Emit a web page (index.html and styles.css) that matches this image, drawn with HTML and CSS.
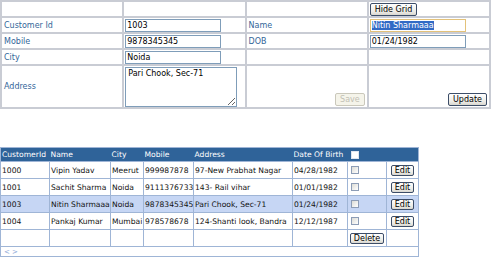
FILE: index.html
```html
<!DOCTYPE html>
<html lang="en">
<head>
    <meta charset="UTF-8">
    <title>Customers</title>
    <link rel="stylesheet" href="styles.css">
</head>
<body>

<table class="form-table">
    <tr>
        <td></td>
        <td></td>
        <td></td>
        <td><button type="button" class="btn">Hide Grid</button></td>
    </tr>
    <tr>
        <td class="label">Customer Id</td>
        <td><input type="text" class="textbox" value="1003"></td>
        <td class="label">Name</td>
        <td><div class="textbox focused"><span class="selected-text">Nitin Sharmaaa</span></div></td>
    </tr>
    <tr>
        <td class="label">Mobile</td>
        <td><input type="text" class="textbox" value="9878345345"></td>
        <td class="label">DOB</td>
        <td><input type="text" class="textbox" value="01/24/1982"></td>
    </tr>
    <tr>
        <td class="label">City</td>
        <td><input type="text" class="textbox" value="Noida"></td>
        <td></td>
        <td></td>
    </tr>
    <tr class="tall-row">
        <td class="label">Address</td>
        <td><textarea class="address">Pari Chook, Sec-71</textarea></td>
        <td class="action-cell"><button type="button" class="btn" disabled>Save</button></td>
        <td class="action-cell"><button type="button" class="btn">Update</button></td>
    </tr>
</table>

<table class="grid">
    <colgroup>
        <col class="col-id">
        <col class="col-name">
        <col class="col-city">
        <col class="col-mobile">
        <col class="col-address">
        <col class="col-dob">
        <col class="col-check">
        <col class="col-edit">
    </colgroup>
    <tr>
        <th>CustomerId</th>
        <th>Name</th>
        <th>City</th>
        <th>Mobile</th>
        <th>Address</th>
        <th>Date Of Birth</th>
        <th><input type="checkbox" class="check check-head"></th>
        <th></th>
    </tr>
    <tr>
        <td>1000</td>
        <td>Vipin Yadav</td>
        <td>Meerut</td>
        <td>999987878</td>
        <td>97-New Prabhat Nagar</td>
        <td>04/28/1982</td>
        <td><input type="checkbox" class="check"></td>
        <td class="center"><button type="button" class="btn btn-small">Edit</button></td>
    </tr>
    <tr>
        <td>1001</td>
        <td>Sachit Sharma</td>
        <td>Noida</td>
        <td>9111376733</td>
        <td>143- Rail vihar</td>
        <td>01/01/1982</td>
        <td><input type="checkbox" class="check"></td>
        <td class="center"><button type="button" class="btn btn-small">Edit</button></td>
    </tr>
    <tr class="selected">
        <td>1003</td>
        <td>Nitin Sharmaaa</td>
        <td>Noida</td>
        <td>9878345345</td>
        <td>Pari Chook, Sec-71</td>
        <td>01/24/1982</td>
        <td><input type="checkbox" class="check"></td>
        <td class="center"><button type="button" class="btn btn-small">Edit</button></td>
    </tr>
    <tr>
        <td>1004</td>
        <td>Pankaj Kumar</td>
        <td>Mumbai</td>
        <td>978578678</td>
        <td>124-Shanti look, Bandra</td>
        <td>12/12/1987</td>
        <td><input type="checkbox" class="check"></td>
        <td class="center"><button type="button" class="btn btn-small">Edit</button></td>
    </tr>
    <tr>
        <td></td>
        <td></td>
        <td></td>
        <td></td>
        <td></td>
        <td></td>
        <td class="center"><button type="button" class="btn btn-small">Delete</button></td>
        <td></td>
    </tr>
    <tr class="pager">
        <td colspan="8">&lt; &gt;</td>
    </tr>
</table>

</body>
</html>
```

FILE: styles.css
```css
body {
    margin: 0;
    background: #fff;
    font-family: "DejaVu Sans", Verdana, sans-serif;
    font-size: 8px;
    color: #111;
}

/* edit form */

.form-table {
    border-collapse: collapse;
    table-layout: fixed;
    width: 491px;
}

.form-table td {
    border: 2px solid #c9ccd4;
    height: 14px;
    padding: 0 1px;
    vertical-align: middle;
}

.form-table .label {
    color: #336699;
    padding-left: 2px;
}

.form-table .tall-row td {
    height: 40px;
}

.form-table .action-cell {
    text-align: right;
    vertical-align: bottom;
    padding: 0 2px 1px 0;
}

.textbox {
    display: block;
    box-sizing: border-box;
    width: 96px;
    height: 13px;
    margin: 0;
    padding: 0 1px;
    border: 1px solid #7f9db9;
    background: #fff;
    font-family: "DejaVu Sans", Verdana, sans-serif;
    font-size: 8px;
    line-height: 11px;
    color: #000;
    outline: none;
}

.textbox.focused {
    border-color: #e3c27a;
}

.selected-text {
    background: #316ac5;
    color: #fff;
}

.address {
    display: block;
    box-sizing: border-box;
    width: 112px;
    height: 40px;
    margin: 0;
    padding: 1px 2px;
    border: 1px solid #7f9db9;
    font-family: "DejaVu Sans", Verdana, sans-serif;
    font-size: 8px;
    color: #000;
}

.btn {
    height: 13px;
    margin: 0;
    padding: 0 4px;
    border: 1px solid #3c4d68;
    border-radius: 2px;
    background: linear-gradient(#ffffff, #ecebe6 70%, #d8d6cf);
    font-family: "DejaVu Sans", Verdana, sans-serif;
    font-size: 8px;
    line-height: 11px;
    color: #000;
}

.btn:disabled {
    border-color: #cac8bb;
    background: #f5f4ea;
    color: #c2c0b5;
}

.btn-small {
    height: 11px;
    line-height: 9px;
    padding: 0 3px;
}

/* customer grid */

.grid {
    margin-top: 38px;
    border-collapse: collapse;
    table-layout: fixed;
    width: 418px;
    border: 1px solid #9fb5d6;
    font-size: 7.6px;
}

.col-id { width: 49px; }
.col-name { width: 61px; }
.col-city { width: 33px; }
.col-mobile { width: 50px; }
.col-address { width: 99px; }
.col-dob { width: 55px; }
.col-check { width: 39px; }
.col-edit { width: 32px; }

.grid th {
    height: 13px;
    padding: 0 0 0 1px;
    background: #2f6399;
    color: #fff;
    font-weight: normal;
    text-align: left;
    white-space: nowrap;
}

.grid td {
    height: 16px;
    padding: 0 0 0 1px;
    border: 1px solid #9fb5d6;
    white-space: nowrap;
    overflow: hidden;
}

.grid .selected td {
    background: #c6d6f4;
}

.grid .center {
    text-align: center;
    padding: 0;
}

.grid .pager td {
    height: 9px;
    font-size: 7px;
    color: #8aa6d6;
    padding-left: 3px;
}

.check {
    appearance: none;
    display: block;
    width: 8px;
    height: 8px;
    margin: 0 0 0 2px;
    border: 1px solid #8d9db6;
    background: linear-gradient(135deg, #dcdcd6, #ffffff);
}

.check-head {
    background: #fff;
    border-color: #e0e6f0;
}
```
